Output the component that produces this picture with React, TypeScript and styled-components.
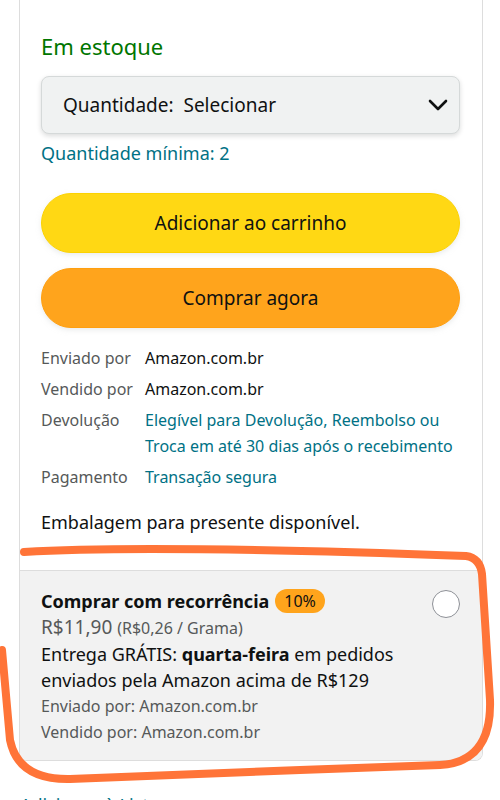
import styled, { createGlobalStyle } from "styled-components";

const GlobalStyle = createGlobalStyle`
  body {
    margin: 0;
    background: #ffffff;
    font-family: "Noto Sans", "Liberation Sans", sans-serif;
    color: #0f1111;
  }
`;

const details = [
  { label: "Enviado por", value: "Amazon.com.br", link: false },
  { label: "Vendido por", value: "Amazon.com.br", link: false },
  {
    label: "Devolução",
    value: "Elegível para Devolução, Reembolso ou Troca em até 30 dias após o recebimento",
    link: true,
  },
  { label: "Pagamento", value: "Transação segura", link: true },
];

const App = () => {
  return (
    <Page>
      <GlobalStyle />
      <Card>
        <Main>
          <Stock>Em estoque</Stock>
          <Select>
            <span>Quantidade:&nbsp; Selecionar</span>
            <svg width="20" height="12" viewBox="0 0 20 12" fill="none">
              <path
                d="M2 2 L10 10 L18 2"
                stroke="#0f1111"
                strokeWidth="2.6"
                strokeLinecap="round"
                strokeLinejoin="round"
              />
            </svg>
          </Select>
          <MinQty>Quantidade mínima: 2</MinQty>
          <Button $bg="#ffd814" $border="#fcd200">Adicionar ao carrinho</Button>
          <Button $bg="#ffa41c" $border="#ff9f0f">Comprar agora</Button>
          <DetailList>
            {details.map((d) => (
              <DetailRow key={d.label}>
                <Label>{d.label}</Label>
                <Value $link={d.link}>{d.value}</Value>
              </DetailRow>
            ))}
          </DetailList>
          <GiftNote>Embalagem para presente disponível.</GiftNote>
        </Main>
        <Recurring>
          <RecurringInfo>
            <TitleLine>
              <Title>Comprar com recorrência</Title>
              <Badge>10%</Badge>
            </TitleLine>
            <Price>
              R$11,90 <small>(R$0,26 / Grama)</small>
            </Price>
            <Delivery>
              Entrega GRÁTIS: <b>quarta-feira</b> em pedidos enviados pela
              Amazon acima de R$129
            </Delivery>
            <Seller>Enviado por: Amazon.com.br</Seller>
            <Seller>Vendido por: Amazon.com.br</Seller>
          </RecurringInfo>
          <Radio />
        </Recurring>
      </Card>
      <ListLink>Adicionar à Lista</ListLink>
      <Scribble viewBox="0 0 500 800" width="500" height="800">
        <path
          d="M24 552 C 120 546, 300 550, 466 556 Q 480 558, 482 574 L 490 700 Q 492 762, 440 765 L 300 770 Q 150 776, 70 779 Q 18 780, 10 740 L 2 650"
          fill="none"
          stroke="#ff7438"
          strokeWidth="8"
          strokeLinecap="round"
          strokeLinejoin="round"
        />
      </Scribble>
    </Page>
  );
};

export default App;

const Page = styled.div`
  position: relative;
  width: 500px;
  height: 800px;
  overflow: hidden;
`;

const Card = styled.div`
  margin: 0 17px 0 19px;
  border: 1px solid #dddddd;
  border-top: none;
  border-radius: 0 0 8px 8px;
  overflow: hidden;
`;

const Main = styled.div`
  padding: 32px 22px 35px 21px;
  display: flex;
  flex-direction: column;
`;

const Stock = styled.div`
  color: #007600;
  font-size: 22px;
  line-height: 28px;
`;

const Select = styled.div`
  margin-top: 16px;
  height: 56px;
  display: flex;
  align-items: center;
  justify-content: space-between;
  padding: 0 11px 0 21px;
  background: #f0f2f2;
  border: 1px solid #d5d9d9;
  border-radius: 8px;
  box-shadow: 0 2px 5px rgba(15, 17, 17, 0.15);
  font-size: 19px;
`;

const MinQty = styled.div`
  margin-top: 7px;
  color: #007185;
  font-size: 18px;
  line-height: 24px;
`;

const Button = styled.div<{ $bg: string; $border: string }>`
  margin-top: 28px;
  height: 58px;
  display: flex;
  align-items: center;
  justify-content: center;
  background: ${(p) => p.$bg};
  border: 1px solid ${(p) => p.$border};
  border-radius: 30px;
  box-shadow: 0 2px 5px rgba(213, 217, 217, 0.5);
  font-size: 19px;

  & + & {
    margin-top: 15px;
  }
`;

const DetailList = styled.div`
  margin-top: 17px;
  display: flex;
  flex-direction: column;
  gap: 5px;
`;

const DetailRow = styled.div`
  display: grid;
  grid-template-columns: 104px 1fr;
  font-size: 16px;
  line-height: 26px;
`;

const Label = styled.span`
  color: #565959;
`;

const Value = styled.span<{ $link: boolean }>`
  color: ${(p) => (p.$link ? "#007185" : "#0f1111")};
`;

const GiftNote = styled.div`
  margin-top: 19px;
  font-size: 18px;
  line-height: 26px;
`;

const Recurring = styled.div`
  display: flex;
  justify-content: space-between;
  align-items: flex-start;
  gap: 16px;
  padding: 17px 22px 15px 21px;
  background: #f2f2f2;
  border-top: 1px solid #dddddd;
`;

const RecurringInfo = styled.div`
  display: flex;
  flex-direction: column;
  font-size: 18px;
  line-height: 26px;
`;

const TitleLine = styled.div`
  display: flex;
  align-items: center;
  gap: 6px;
`;

const Title = styled.span`
  font-weight: 700;
`;

const Badge = styled.span`
  background: #ffa41c;
  border-radius: 12px;
  padding: 0 9px;
  height: 24px;
  line-height: 24px;
  font-size: 16px;
`;

const Price = styled.div`
  color: #565959;
  font-size: 19px;

  small {
    font-size: 16px;
  }
`;

const Delivery = styled.div`
  max-width: 370px;
`;

const Seller = styled.div`
  color: #565959;
  font-size: 16px;
`;

const Radio = styled.span`
  margin-top: 2px;
  width: 26px;
  height: 26px;
  flex-shrink: 0;
  border-radius: 50%;
  border: 1.5px solid #8d9096;
  background: #ffffff;
`;

const ListLink = styled.div`
  margin: 31px 0 0 20px;
  color: #007185;
  font-size: 18px;
  line-height: 26px;
`;

const Scribble = styled.svg`
  position: absolute;
  left: 0;
  top: 0;
  pointer-events: none;
`;
